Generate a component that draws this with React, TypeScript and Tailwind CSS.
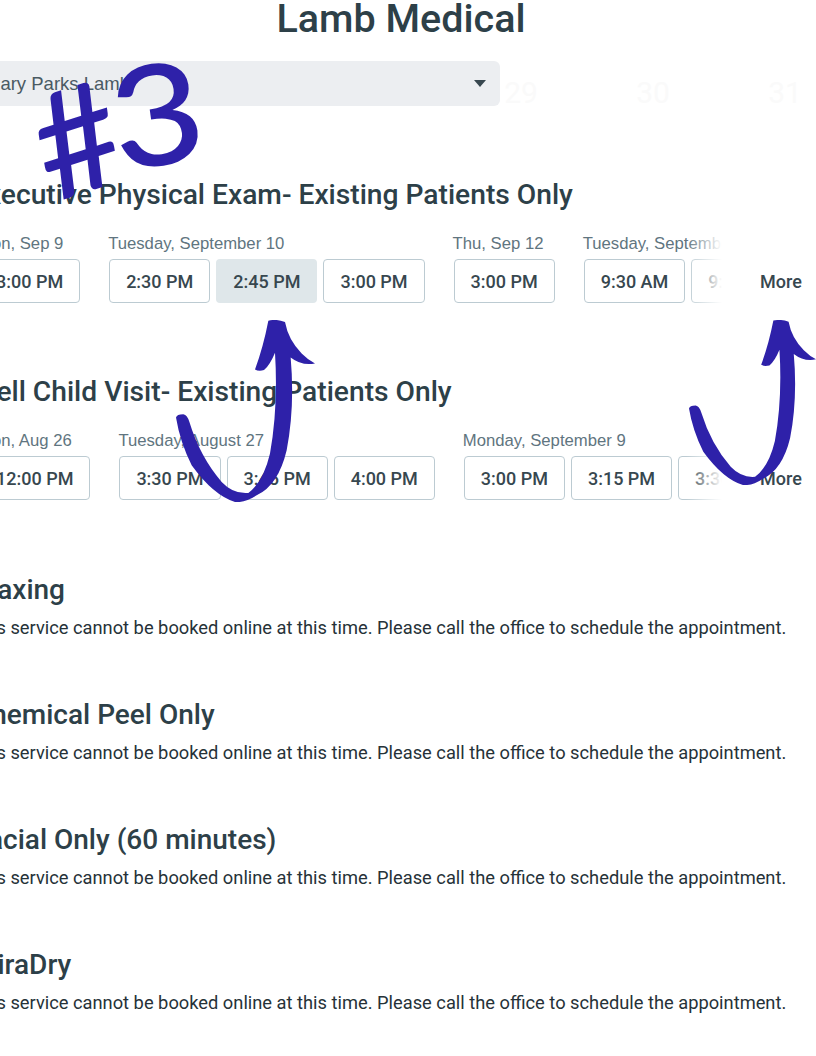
const rowOne = [
  { label: "Mon, Sep 9", slots: ["3:00 PM"] },
  { label: "Tuesday, September 10", slots: ["2:30 PM", "2:45 PM", "3:00 PM"] },
  { label: "Thu, Sep 12", slots: ["3:00 PM"] },
  { label: "Tuesday, September 17", slots: ["9:30 AM", "9:45 AM"] },
];

const rowTwo = [
  { label: "Mon, Aug 26", slots: ["12:00 PM"] },
  { label: "Tuesday, August 27", slots: ["3:30 PM", "3:45 PM", "4:00 PM"] },
  { label: "Monday, September 9", slots: ["3:00 PM", "3:15 PM", "3:30 PM"] },
];

const callOnly = ["Waxing", "Chemical Peel Only", "Facial Only (60 minutes)", "MiraDry"];

function Slots({ days }: { days: { label: string; slots: string[] }[] }) {
  return (
    <div className="flex items-start mt-[19px]">
      <div className="relative w-[743px] overflow-hidden">
        <div className="flex gap-[29px] w-[1000px]">
          {days.map((day, i) => (
            <div key={i} className="shrink-0">
              <div className="h-[24px] text-[16.7px] leading-[26px] font-['Liberation_Sans',sans-serif] text-[#5f7580] whitespace-nowrap -ml-px">{day.label}</div>
              <div className="flex gap-[6px] mt-[4px]">
                {day.slots.map((slot) => (
                  <div
                    key={slot}
                    className={
                      slot === "2:45 PM"
                        ? "h-[44px] px-[17px] flex items-center rounded-[4px] bg-[#dfe7ea] text-[18px] font-medium text-[#37474f] whitespace-nowrap"
                        : "h-[44px] px-[16px] flex items-center rounded-[4px] border border-[#bccbd2] text-[18px] font-medium text-[#37474f] whitespace-nowrap"
                    }
                  >
                    {slot}
                  </div>
                ))}
              </div>
            </div>
          ))}
        </div>
        <div className="absolute top-0 right-0 bottom-0 w-[36px] bg-gradient-to-r from-white/0 to-white" />
      </div>
      <div className="ml-[38px] mt-[28px] h-[44px] flex items-center text-[18px] font-medium text-[#37474f]">More</div>
    </div>
  );
}

function Arrow({ className }: { className: string }) {
  return (
    <svg viewBox="528 30 417 545" preserveAspectRatio="none" className={className}>
      <path
        fill="#2e21a9"
        d="M805 32 Q830 26 855 36 Q865 90 905 130 Q925 150 945 160 Q905 168 872 142 Q885 290 860 420 Q835 525 770 555 Q735 578 705 575 Q640 555 575 465 Q540 395 528 322 Q530 312 550 312 Q562 314 568 335 Q600 440 665 515 Q700 552 745 548 Q790 515 810 430 Q835 290 825 128 Q810 165 792 180 Q775 184 765 178 Q790 110 805 32 Z"
      />
    </svg>
  );
}

export default function App() {
  return (
    <div className="relative w-[816px] h-[1056px] overflow-hidden bg-white font-['Roboto',sans-serif]">
      <div className="w-[844px] -ml-[21px]">
        <h1 className="h-[38px] text-center text-[39.5px] leading-[38px] font-medium text-[#2d4048]">Lamb Medical</h1>

        <div className="flex items-start mt-[23px]">
          <div className="w-[521px] h-[45px] shrink-0 flex items-center justify-between rounded-[6px] bg-[#eceef1] pl-[6px] pr-[14px] text-[18.5px] font-['Liberation_Sans',sans-serif] text-[#4a5a63]">
            <span>Mary Parks Lamb</span>
            <span className="w-0 h-0 border-x-[6px] border-x-transparent border-t-[7px] border-t-[#37474f]" />
          </div>
          <div className="flex mt-[14px] text-[30px] leading-[36px] text-[#fafafa]">
            <span className="w-[132px] text-center -ml-[45px]">29</span>
            <span className="w-[132px] text-center">30</span>
            <span className="w-[132px] text-center">31</span>
          </div>
        </div>

        <section className="mt-[67px]">
          <h2 className="h-[34px] -ml-[8px] text-[28.2px] leading-[34px] font-medium text-[#2d4048] whitespace-nowrap">Executive Physical Exam- Existing Patients Only</h2>
          <Slots days={rowOne} />
        </section>

        <section className="mt-[72px]">
          <h2 className="h-[34px] -ml-[7px] text-[28.2px] leading-[34px] font-medium text-[#2d4048] whitespace-nowrap">Well Child Visit- Existing Patients Only</h2>
          <Slots days={rowTwo} />
        </section>

        <div className="mt-[73px] -ml-[6px] flex flex-col gap-[56px]">
          {callOnly.map((name) => (
            <section key={name}>
              <h2 className="h-[34px] text-[28px] leading-[34px] font-medium text-[#2d4048] whitespace-nowrap">{name}</h2>
              <p className="mt-[7px] -ml-[2px] h-[28px] text-[18.3px] leading-[28px] text-[#263238] whitespace-nowrap">
                This service cannot be booked online at this time. Please call the office to schedule the appointment.
              </p>
            </section>
          ))}
        </div>
      </div>

      {/* Hand drawn marks on top of the page */}
      <div className="absolute left-[33px] top-[30px] flex items-start text-[#2e21a9] font-['Lato',sans-serif] leading-none">
        <span className="block text-[146px] -rotate-[18deg] mt-[34px] font-medium">#</span>
        <span className="block text-[140px] -rotate-[8deg] scale-x-[1.14] -ml-[2px] mt-[11px] font-medium">3</span>
      </div>
      <Arrow className="absolute left-[176px] top-[320px] w-[139px] h-[182px]" />
      <Arrow className="absolute left-[689px] top-[320px] w-[127px] h-[165px]" />
    </div>
  );
}
